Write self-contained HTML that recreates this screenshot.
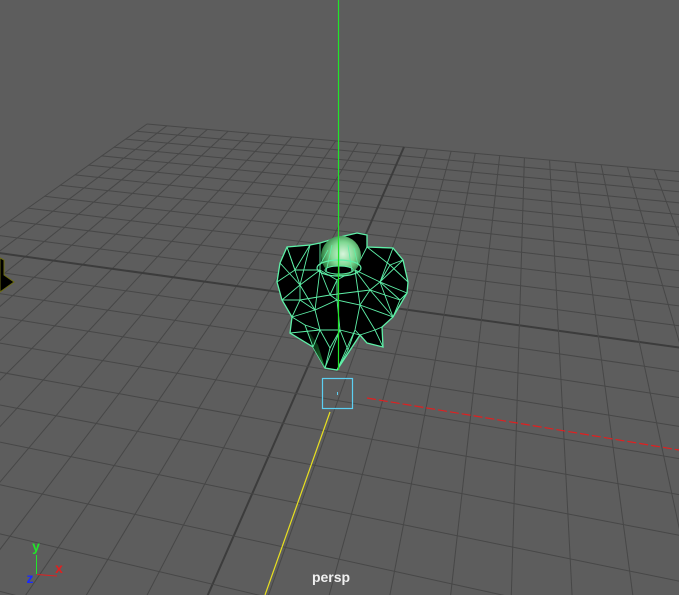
<!DOCTYPE html>
<html><head><meta charset="utf-8"><style>
html,body{margin:0;padding:0;background:#5d5d5d;overflow:hidden;width:679px;height:595px}
svg{display:block;position:absolute;left:0;top:0}
</style></head><body>
<svg id="s" width="679" height="595" xmlns="http://www.w3.org/2000/svg">
<rect width="679" height="595" fill="#5d5d5d"/>
<g id="grid"></g>
<defs>
<radialGradient id="sph" cx="0.55" cy="0.45" r="0.6">
<stop offset="0" stop-color="#d8f5dc"/><stop offset="0.5" stop-color="#7fd892"/><stop offset="1" stop-color="#1e6a30"/>
</radialGradient>
<linearGradient id="gg" x1="0" y1="0" x2="1" y2="1">
<stop offset="0" stop-color="#000"/><stop offset="0.6" stop-color="#0a3a16"/><stop offset="1" stop-color="#1f8a3a"/>
</linearGradient>
</defs>
<!-- left object -->
<polygon points="0,258 4,260 4,275 14,282 0,292" fill="#000" stroke="#6a6a10" stroke-width="1"/>
<!-- object -->
<polygon points="287,247 280,263 277,282 282,300 292,317 290,333 313,347 325,368 337,370 360,335 367,343 383,347 382,327 393,317 407,293 408,282 403,260 393,248 367,247 367,235 357,233 340,237 320,243 310,245" fill="#000" stroke="#5ef0a8" stroke-width="1.3"/>
<polygon points="300,318 313,347 325,368 318,345" fill="url(#gg)"/>
<g stroke="#5ef0a8" stroke-width="0.9" fill="none">
<path d="M287,247 L300,285 L282,300 M300,285 L320,270 L337,280 L355,270 L380,282 L407,293 M300,285 L315,310 L337,300 L360,305 L393,317 M315,310 L292,317 M315,310 L320,330 L313,347 M337,300 L340,330 L325,368 M360,305 L355,330 L337,370 M340,330 L360,335 M320,330 L340,330 M310,245 L300,285 M393,248 L380,282 L403,260 M367,247 L355,270 M320,243 L320,270 M280,263 L300,285 M380,282 L393,317 M355,330 L367,343 M290,333 L320,330 M337,280 L337,300 M320,270 L315,310 M355,270 L360,305 M300,300 L330,295 L370,290 L400,300"/>
<path d="M287,247 L295,270 L277,282 M295,270 L310,245 M295,270 L320,270 M282,300 L300,300 L292,317 M300,300 L315,310 M300,300 L300,285 M330,295 L320,270 M330,295 L337,280 M330,295 L337,300 M370,290 L355,270 M370,290 L380,282 M370,290 L360,305 M370,290 L393,317 M400,300 L393,317 M400,300 L407,293 M400,300 L380,282 M390,265 L403,260 M390,265 L380,282 M390,265 L408,282 M390,265 L367,247 M305,325 L320,330 M305,325 L292,317 M305,325 L313,347 M330,348 L320,330 M330,348 L340,330 M330,348 L325,368 M348,350 L340,330 M348,350 L337,370 M348,350 L355,330 M375,330 L360,335 M375,330 L382,327 M375,330 L383,347 M375,330 L360,305"/>
</g>
<circle cx="341" cy="256" r="20" fill="url(#sph)"/>
<ellipse cx="339" cy="268" rx="22" ry="8" fill="none" stroke="#5ef0a8" stroke-width="1.2"/>
<ellipse cx="339" cy="270" rx="14" ry="4" fill="#000" stroke="#5ef0a8" stroke-width="1"/>
<g stroke="#5ef0a8" stroke-width="0.8">
<path d="M320,265 L328,250 M326,272 L332,245 M352,272 L348,245 M358,265 L354,248 M339,276 L339,238"/>
</g>
<!-- axes -->
<line x1="338.5" y1="0" x2="338.5" y2="370" stroke="#22e42a" stroke-width="1.2"/>
<rect x="322.5" y="378.5" width="30" height="30" fill="none" stroke="#5ccff2" stroke-width="1.2"/>
<rect x="337" y="392" width="1" height="3" fill="#5ccff2"/>
<line x1="367" y1="398" x2="679" y2="450" stroke="#e02020" stroke-width="1.2" stroke-dasharray="9,3"/>
<line x1="330" y1="412" x2="265" y2="595" stroke="#e8e020" stroke-width="1.2"/>
<!-- gizmo -->
<line x1="36.5" y1="555" x2="36.5" y2="574" stroke="#22e42a" stroke-width="1"/>
<line x1="37" y1="574.5" x2="57" y2="576" stroke="#e02020" stroke-width="1"/>
<text x="36" y="551" fill="#22e42a" font-family="Liberation Sans, sans-serif" font-weight="bold" font-size="14" text-anchor="middle">y</text>
<text x="59" y="573" fill="#e02020" font-family="Liberation Sans, sans-serif" font-weight="bold" font-size="14" text-anchor="middle">x</text>
<text x="30" y="583" fill="#1a2aff" font-family="Liberation Sans, sans-serif" font-weight="bold" font-size="14" text-anchor="middle">z</text>
<text x="331" y="582" fill="#f0f0f0" font-family="Liberation Sans, sans-serif" font-weight="bold" font-size="14" text-anchor="middle">persp</text>
</svg>
<script>
(function(){
var src=[[-12,-12],[0,-12],[0,0],[-12,0]];
var dst=[[147,124],[404,147],[337,300],[-30,249]];
var A=[],b=[];
for(var i=0;i<4;i++){var u=src[i][0],v=src[i][1],x=dst[i][0],y=dst[i][1];
A.push([u,v,1,0,0,0,-u*x,-v*x]);b.push(x);
A.push([0,0,0,u,v,1,-u*y,-v*y]);b.push(y);}
var n=8;
for(var c=0;c<n;c++){var p=c;for(var r=c+1;r<n;r++)if(Math.abs(A[r][c])>Math.abs(A[p][c]))p=r;
var t=A[c];A[c]=A[p];A[p]=t;t=b[c];b[c]=b[p];b[p]=t;
for(var r=0;r<n;r++){if(r==c)continue;var f=A[r][c]/A[c][c];for(var k=c;k<n;k++)A[r][k]-=f*A[c][k];b[r]-=f*b[c];}}
var h=[];for(var i=0;i<n;i++)h.push(b[i]/A[i][i]);h.push(1);
function P(u,v){var w=h[6]*u+h[7]*v+1;return [(h[0]*u+h[1]*v+h[2])/w,(h[3]*u+h[4]*v+h[5])/w,w];}
var g=document.getElementById('grid'),s='';
function seg(u1,v1,u2,v2,th){
 var pts=[];for(var k=0;k<=40;k++){var t=k/40;var q=P(u1+(u2-u1)*t,v1+(v2-v1)*t);if(q[2]>0.02)pts.push(q);}
 if(pts.length<2)return;
 var a=pts[0],z=pts[pts.length-1];
 s+='<line x1="'+a[0].toFixed(1)+'" y1="'+a[1].toFixed(1)+'" x2="'+z[0].toFixed(1)+'" y2="'+z[1].toFixed(1)+'" stroke="'+(th?'#3c3c3c':'#474747')+'" stroke-width="'+(th?2:1)+'"/>';
}
for(var i=-12;i<=12;i++){seg(i,-12,i,12,i==0);seg(-12,i,12,i,i==0);}
g.innerHTML=s;
})();
</script>
</body></html>
